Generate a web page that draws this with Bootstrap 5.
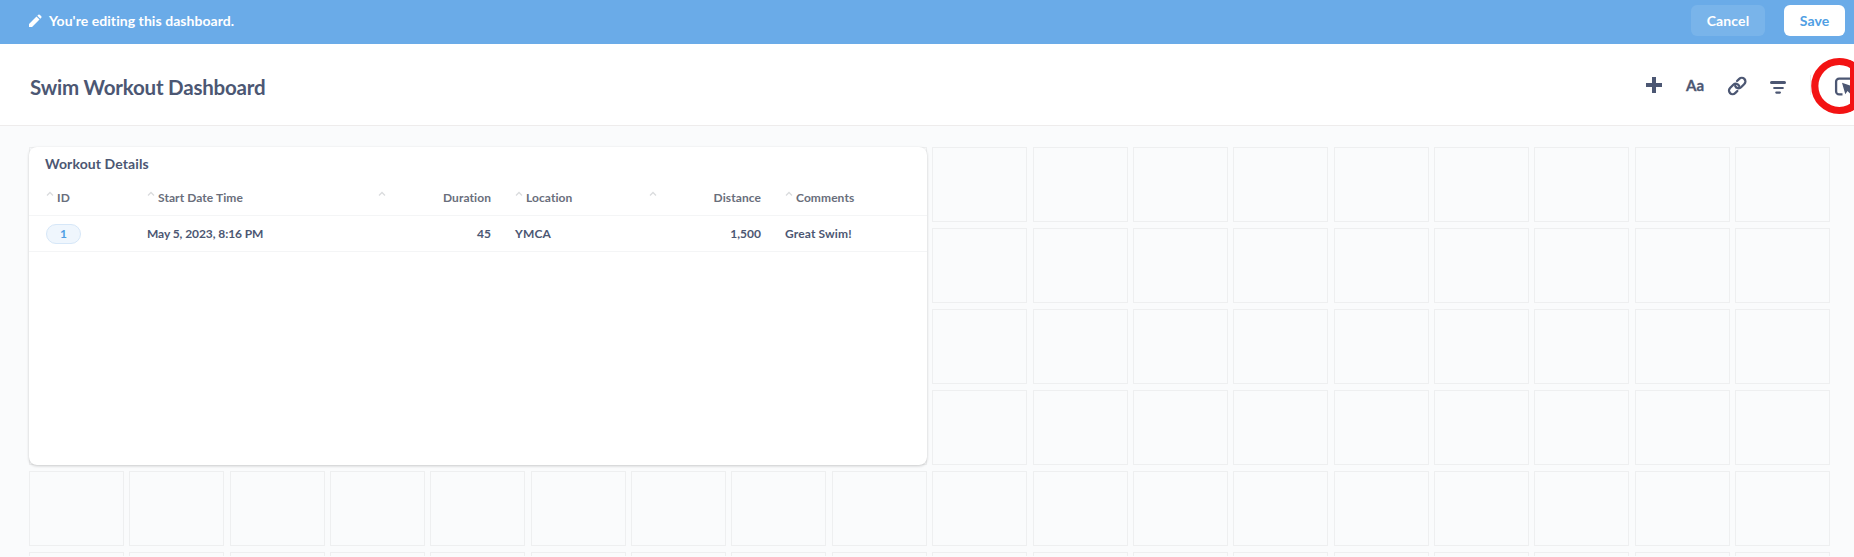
<!DOCTYPE html>
<html lang="en">
<head>
<meta charset="utf-8">
<title>Swim Workout Dashboard</title>
<link rel="stylesheet" href="https://cdn.jsdelivr.net/npm/bootstrap@5.3.0/dist/css/bootstrap.min.css">
<style>
html{overflow:hidden}
body{font-family:Lato,sans-serif;font-weight:700;color:#4c5773;background:#fafbfc;height:557px}
.edit-bar{height:44px;background:#6aabe8;color:#fff;font-size:14px;padding:0 9px 3px 28px}
.edit-bar span{margin-left:7px;letter-spacing:.06px}
.edit-bar .btn{font:700 14px/17px Lato,sans-serif;letter-spacing:.12px;height:31px;border-radius:6px;border:0;padding:0}
.btn-cancel{width:74px;background:#79b4ea;color:#fff;margin-right:19px}
.btn-save{width:61px;background:#fff;color:#509ee3}
.title-bar{height:82px;border-bottom:1px solid #eeecec;padding-left:30px}
.title-bar h1{font-size:20.5px;line-height:26px;font-weight:700;letter-spacing:-.2px;padding-top:5px}
.tools{font-size:15px}
.board{display:grid;grid-template-columns:repeat(18,minmax(0,1fr));grid-template-rows:repeat(6,75.4px);gap:5.6px 5.4px;margin:21px 24px 0 29px;height:409px}
.slot{border:1px solid #eeeff0}
.panel{grid-area:1/1/5/10;z-index:1;border:0;border-radius:8px;box-shadow:0 1px 3px rgba(0,0,0,.2);color:inherit}
.panel h2{font-size:14px;line-height:17px;font-weight:700;letter-spacing:.1px;margin:8px 16px 0}
.grid-line{display:grid;grid-template-columns:101px 231px 137px 134px 136px 1fr;border-bottom:1px solid #f4f5f6;font-size:12px;line-height:16px;padding-left:17px}
.heads{height:44px;padding-top:8px;color:#696e7b;letter-spacing:.08px}
.vals{height:36px}
.when{letter-spacing:-.08px}
.note{letter-spacing:.14px}
.num{padding-right:24px}
.caret{width:8px;height:6px;margin:-8px 3px 0 0}
.pill{width:35px;height:20px;border:1px solid #d6e7f8;border-radius:10px;background:#eff6fd;color:#509ee3;line-height:18px}
</style>
</head>
<body class="overflow-hidden">
<header class="edit-bar d-flex align-items-center">
<svg width="14" height="14" viewBox="0 0 14 14" fill="#fff"><path d="M1 13v-3L8.500 2.500l3 3L4 13zM9.300 1.700l1-1q.7-.6 1.400 0l1.600 1.600q.6.700 0 1.400l-1 1z"/></svg>
<span class="me-auto">You're editing this dashboard.</span>
<button class="btn btn-cancel">Cancel</button><button class="btn btn-save">Save</button>
</header>
<section class="title-bar bg-white d-flex align-items-center justify-content-between">
<h1 class="mb-0">Swim Workout Dashboard</h1>
<svg class="tools" width="208" height="81" fill="none" stroke="#4c5773">
<path d="M0 41h16M8 33v16" stroke-width="4"/>
<text x="40" y="47" fill="#4c5773" stroke="#4c5773" stroke-width=".3">Aa</text>
<g transform="translate(91.200 42) rotate(-45)" stroke-width="2.300" stroke-linecap="round"><path d="M-3.400 3.600H-6.500a3.600 3.600 0 0 1 0-7.200H-1.900a3.600 3.600 0 0 1 3.300 5"/><path d="M3.400-3.600H6.500a3.600 3.600 0 0 1 0 7.200H1.900a3.600 3.600 0 0 1-3.300-5"/></g>
<path d="M125.500 38.500h13" stroke-width="3" stroke-linecap="round"/><path d="M128.200 44h8.600M130.300 48.600h3.600" stroke-width="2.200" stroke-linecap="round"/>
<path d="M164.500 31v20" stroke="#eeecec"/>
<path d="M204 34.600h-10.900a3 3 0 0 0-3 3v9.800a3 3 0 0 0 3 3h3.400" stroke-width="2.300"/>
<path d="M196 38.800l3.300 11.500 2.200-3.300 2.500 2.500V41.600z" fill="#4c5773" stroke="none"/>
<path d="M204 16.200A28 28 0 0 1 208 18.400V65.600A28 28 0 0 1 204 67.800z" fill="#f31313" stroke="none"/>
<circle cx="193.300" cy="42" r="24.500" stroke="#f31313" stroke-width="7.200"/>
</svg>
</section>
<main class="board">
<section class="card panel">
<h2>Workout Details</h2>
<div class="grid-line heads align-items-center">
<div><svg class="caret" viewBox="0 0 8 6"><use href="#up"/></svg>ID</div>
<div><svg class="caret" viewBox="0 0 8 6"><use href="#up"/></svg>Start Date Time</div>
<div class="num d-flex justify-content-between align-items-center"><svg class="caret" viewBox="0 0 8 6"><use href="#up"/></svg>Duration</div>
<div><svg class="caret" viewBox="0 0 8 6"><use href="#up"/></svg>Location</div>
<div class="num d-flex justify-content-between align-items-center"><svg class="caret" viewBox="0 0 8 6"><use href="#up"/></svg>Distance</div>
<div><svg class="caret" viewBox="0 0 8 6"><use href="#up"/></svg>Comments</div>
</div>
<div class="grid-line vals align-items-center">
<div><div class="pill text-center">1</div></div><div class="when">May 5, 2023, 8:16 PM</div><div class="num text-end">45</div><div class="note">YMCA</div><div class="num text-end">1,500</div><div class="note">Great Swim!</div>
</div>
</section>
</main>
<svg class="position-absolute" width="0" height="0"><defs><path id="up" d="M1 4.500 4 1.500l3 3" fill="none" stroke="#dadcde" stroke-width="1.300"/></defs></svg>
<script>
const board=document.querySelector('.board');
for(let r=1;r<=6;r++)for(let c=1;c<=18;c++){const s=document.createElement('div');s.className='slot';s.style.gridArea=r+'/'+c;if(r===6)s.style.height='4px',s.style.borderBottom='0';board.append(s)}
</script>
<script src="https://cdn.jsdelivr.net/npm/bootstrap@5.3.0/dist/js/bootstrap.bundle.min.js"></script>
</body>
</html>
